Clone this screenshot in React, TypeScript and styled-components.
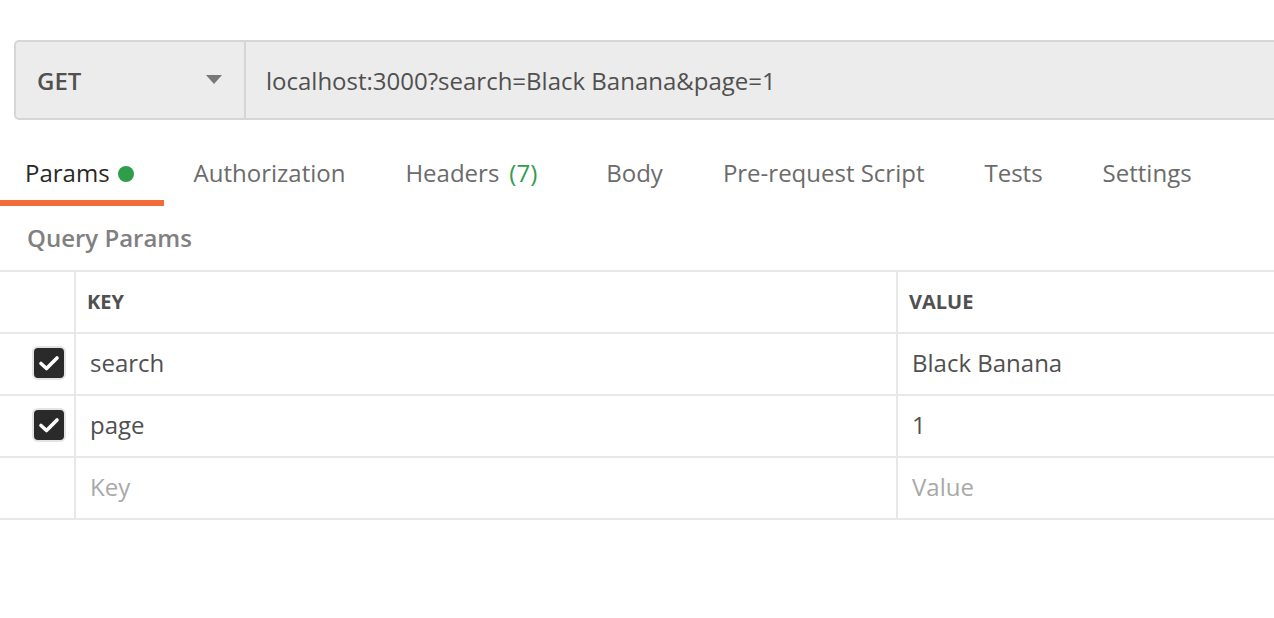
import React from "react";
import styled, { createGlobalStyle } from "styled-components";

const Global = createGlobalStyle`
  html, body { margin: 0; padding: 0; background: #ffffff; }
  body { font-family: "Open Sans", "Liberation Sans", sans-serif; overflow: hidden; }
  * { box-sizing: border-box; }
`;

const Page = styled.div`
  width: 1274px;
  height: 618px;
  overflow: hidden;
  padding-top: 40px;
`;

const RequestBar = styled.div`
  display: flex;
  height: 80px;
  margin-left: 14px;
  margin-right: -40px;
  background: #ececec;
  border: 2px solid #d6d6d6;
  border-radius: 5px;
`;

const MethodSelect = styled.div`
  width: 230px;
  flex: none;
  display: flex;
  align-items: center;
  justify-content: space-between;
  padding: 0 22px 0 21px;
  border-right: 2px solid #d6d6d6;
  font-size: 24px;
  font-weight: 600;
  color: #505050;
`;

const Caret = styled.svg`
  width: 16px;
  height: 10px;
  display: block;
`;

const UrlText = styled.div`
  flex: 1;
  display: flex;
  align-items: center;
  padding-left: 20px;
  font-size: 24px;
  color: #505050;
`;

const Tabs = styled.div`
  display: flex;
  margin-top: 28px;
  height: 58px;
`;

const Tab = styled.div<{ $active?: boolean; $padL?: number; $padR?: number }>`
  display: flex;
  align-items: center;
  padding: 0 ${(p) => p.$padR ?? 30}px 3px ${(p) => p.$padL ?? 30}px;
  font-size: 24px;
  color: ${(p) => (p.$active ? "#282828" : "#6b6b6b")};
  border-bottom: 6px solid ${(p) => (p.$active ? "#f26b3a" : "transparent")};
  white-space: nowrap;
`;

const Dot = styled.span`
  width: 16px;
  height: 16px;
  border-radius: 50%;
  background: #2f9e4a;
  margin-left: 8px;
  margin-top: 2px;
`;

const Count = styled.span`
  color: #2f9e4a;
  margin-left: 10px;
`;

const SectionTitle = styled.div`
  height: 64px;
  display: flex;
  align-items: center;
  padding-left: 27px;
  padding-bottom: 2px;
  font-size: 24px;
  font-weight: 600;
  color: #808080;
`;

const Table = styled.div`
  border-top: 2px solid #e8e8e8;
`;

const Row = styled.div`
  display: grid;
  grid-template-columns: 76px 822px 1fr;
  height: 62px;
  border-bottom: 2px solid #e8e8e8;
`;

const CheckCell = styled.div`
  display: flex;
  align-items: center;
  justify-content: flex-end;
  padding-right: 8px;
  padding-bottom: 2px;
  border-right: 2px solid #e8e8e8;
`;

const Cell = styled.div<{ $divider?: boolean; $header?: boolean; $placeholder?: boolean }>`
  display: flex;
  align-items: center;
  padding-left: ${(p) => (p.$header ? 11 : 14)}px;
  padding-bottom: ${(p) => (p.$header ? 1 : 3)}px;
  border-right: ${(p) => (p.$divider ? "2px solid #e8e8e8" : "none")};
  font-size: ${(p) => (p.$header ? "20px" : "24px")};
  font-weight: ${(p) => (p.$header ? 700 : 400)};
  color: ${(p) => (p.$placeholder ? "#a9a9a9" : "#505050")};
  white-space: nowrap;
  overflow: hidden;
`;

const CheckBox = styled.div`
  width: 34px;
  height: 34px;
  border-radius: 6px;
  background: #2a2a2a;
  border: 2px solid #e4e4e4;
  display: flex;
  align-items: center;
  justify-content: center;
`;

const Check = () => (
  <CheckBox>
    <svg width="22" height="18" viewBox="0 0 22 18">
      <path d="M3 9.5 L8.5 14.5 L19 4" fill="none" stroke="#ffffff" strokeWidth="3.6" strokeLinecap="round" strokeLinejoin="round" />
    </svg>
  </CheckBox>
);

const params = [
  { key: "search", value: "Black Banana" },
  { key: "page", value: "1" },
];

export default function App() {
  return (
    <Page>
      <Global />
      <RequestBar>
        <MethodSelect>
          <span>GET</span>
          <Caret viewBox="0 0 16 10">
            <path d="M0 0 H16 L8 9 Z" fill="#777777" />
          </Caret>
        </MethodSelect>
        <UrlText>localhost:3000?search=Black Banana&amp;page=1</UrlText>
      </RequestBar>
      <Tabs>
        <Tab $active $padL={25}>
          Params<Dot />
        </Tab>
        <Tab>Authorization</Tab>
        <Tab $padR={39}>
          Headers<Count>(7)</Count>
        </Tab>
        <Tab>Body</Tab>
        <Tab>Pre-request Script</Tab>
        <Tab>Tests</Tab>
        <Tab>Settings</Tab>
      </Tabs>
      <SectionTitle>Query Params</SectionTitle>
      <Table>
        <Row>
          <CheckCell />
          <Cell $header $divider>KEY</Cell>
          <Cell $header>VALUE</Cell>
        </Row>
        {params.map((p) => (
          <Row key={p.key}>
            <CheckCell>
              <Check />
            </CheckCell>
            <Cell $divider>{p.key}</Cell>
            <Cell>{p.value}</Cell>
          </Row>
        ))}
        <Row>
          <CheckCell />
          <Cell $divider $placeholder>Key</Cell>
          <Cell $placeholder>Value</Cell>
        </Row>
      </Table>
    </Page>
  );
}
